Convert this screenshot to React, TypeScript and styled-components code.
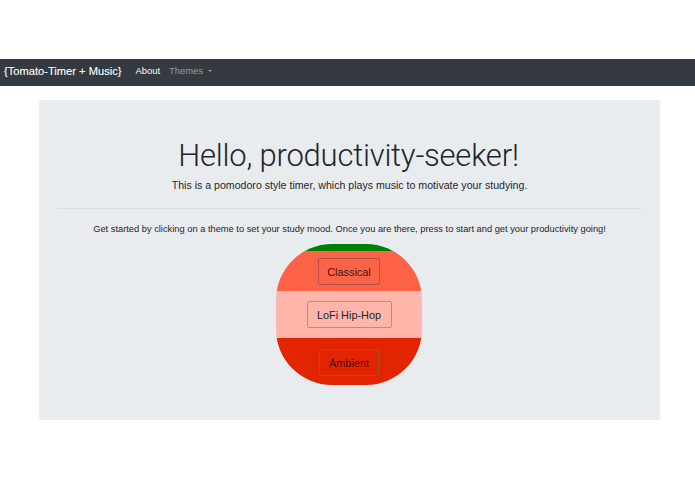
import React from 'react';
import styled, { createGlobalStyle } from 'styled-components';

const GlobalStyle = createGlobalStyle`
  html, body {
    margin: 0;
    padding: 0;
    background: #fff;
    font-family: "Liberation Sans", Arial, sans-serif;
    color: #212529;
  }
  * { box-sizing: border-box; }
`;

const Page = styled.div`
  width: 695px;
  height: 494px;
  padding-top: 59px;
  overflow: hidden;
`;

const Navbar = styled.nav`
  height: 27px;
  background: #343a40;
  display: flex;
  align-items: center;
  padding: 0 0 4px 4px;
`;

const Brand = styled.a`
  font-size: 11.15px;
  color: #fff;
  margin-right: 14px;
  white-space: nowrap;
  -webkit-text-stroke: 0.1px #fff;
`;

const NavLink = styled.a<{ $muted?: boolean }>`
  font-size: 9.4px;
  color: ${({ $muted }) => ($muted ? 'rgba(255, 255, 255, 0.5)' : '#fff')};
  margin-right: 9px;
  display: flex;
  align-items: center;
`;

const Caret = styled.span`
  width: 0;
  height: 0;
  margin-left: 5px;
  border-top: 2.5px solid rgba(255, 255, 255, 0.5);
  border-left: 2.5px solid transparent;
  border-right: 2.5px solid transparent;
`;

const Jumbotron = styled.main`
  width: 621px;
  height: 320px;
  margin: 14px 0 0 39px;
  padding: 36px 18px 0;
  background: #e9ecef;
  border-radius: 3px;
  display: flex;
  flex-direction: column;
  align-items: center;
`;

const Title = styled.h1`
  margin: 0 2px 0 0;
  font-family: Roboto, "Liberation Sans", sans-serif;
  font-size: 31px;
  line-height: 40px;
  letter-spacing: -0.22px;
  font-weight: 300;
  color: #212529;
  white-space: nowrap;
`;

const Lead = styled.p`
  margin: 1px 0 0;
  font-size: 10.6px;
  line-height: 17px;
  color: #212529;
  white-space: nowrap;
`;

const Divider = styled.hr`
  width: 100%;
  margin: 14px 0 0;
  border: 0;
  border-top: 1px solid #dcdfe2;
`;

const Intro = styled.p`
  margin: 13px 0 0;
  font-size: 9.3px;
  line-height: 14px;
  color: #212529;
  white-space: nowrap;
`;

const ThemeDial = styled.div`
  width: 146px;
  height: 141px;
  margin: 8px 1px 0 0;
  border-radius: 56px;
  overflow: hidden;
  display: flex;
  flex-direction: column;
`;

const ThemeBand = styled.div<{ $bg: string; $height: number; $nudge: number }>`
  height: ${({ $height }) => $height}px;
  padding-top: ${({ $nudge }) => $nudge}px;
  background: ${({ $bg }) => $bg};
  display: flex;
  align-items: center;
  justify-content: center;
`;

const ThemeButton = styled.button<{ $width: number; $border: string; $ink: string }>`
  width: ${({ $width }) => $width}px;
  height: 27px;
  padding: 0;
  background: transparent;
  border: 1px solid ${({ $border }) => $border};
  border-radius: 2px;
  font-family: "Liberation Sans", Arial, sans-serif;
  font-size: 10.9px;
  color: ${({ $ink }) => $ink};
`;

const themes = [
  { name: 'Classical', bg: '#ff6347', height: 40, nudge: 1, width: 62, border: '#a9534a', ink: '#3d1210' },
  { name: 'LoFi Hip-Hop', bg: '#ffb6aa', height: 47, nudge: 0, width: 85, border: '#8f9ba3', ink: '#212529' },
  { name: 'Ambient', bg: '#e32400', height: 47, nudge: 2, width: 60, border: '#a5541c', ink: '#4a0d04' },
];

export default function App() {
  return (
    <Page>
      <GlobalStyle />
      <Navbar>
        <Brand>{'{Tomato-Timer + Music}'}</Brand>
        <NavLink>About</NavLink>
        <NavLink $muted>
          Themes
          <Caret />
        </NavLink>
      </Navbar>
      <Jumbotron>
        <Title>Hello, productivity-seeker!</Title>
        <Lead>This is a pomodoro style timer, which plays music to motivate your studying.</Lead>
        <Divider />
        <Intro>
          Get started by clicking on a theme to set your study mood. Once you are there, press to start and get your productivity going!
        </Intro>
        <ThemeDial>
          <ThemeBand $bg="#008000" $height={7} $nudge={0} />
          {themes.map((t) => (
            <ThemeBand key={t.name} $bg={t.bg} $height={t.height} $nudge={t.nudge}>
              <ThemeButton $width={t.width} $border={t.border} $ink={t.ink}>
                {t.name}
              </ThemeButton>
            </ThemeBand>
          ))}
        </ThemeDial>
      </Jumbotron>
    </Page>
  );
}
